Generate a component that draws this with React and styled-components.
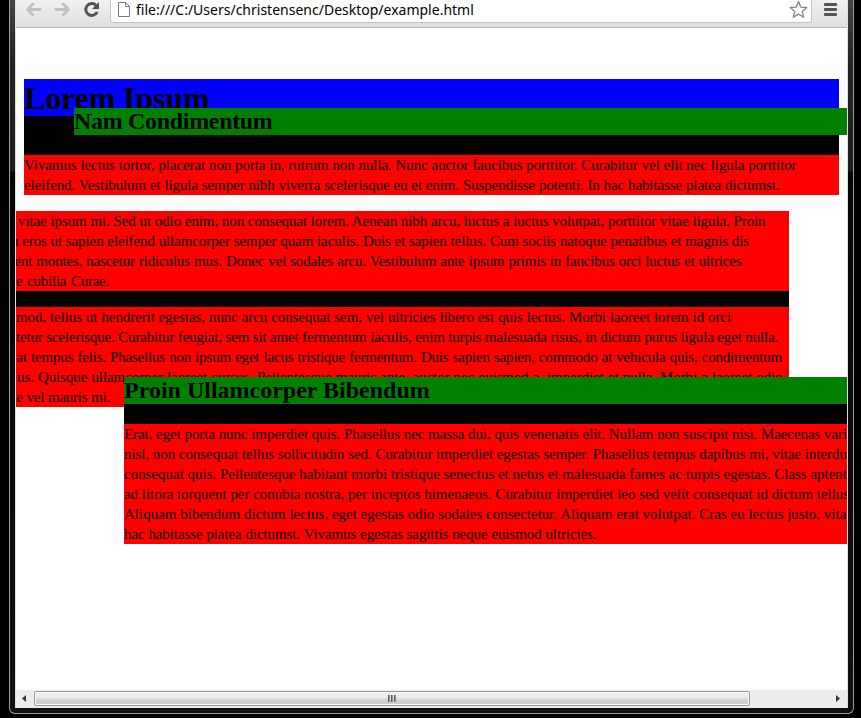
import React from 'react';
import styled, { createGlobalStyle } from 'styled-components';

const Global = createGlobalStyle`
  * { box-sizing: border-box; }
  body { margin: 0; background: #000; overflow: hidden; }
`;

const Desktop = styled.div`
  width: 861px;
  height: 718px;
  padding: 0 7px 4px 9px;
  background: #000;
`;

const WindowFrame = styled.div`
  width: 845px;
  height: 714px;
  padding: 0 5px 5px;
  border: 1px solid #9b9b9b;
  border-top: 0;
  border-radius: 0 0 6px 6px;
  background: linear-gradient(#454545 0, #242424 60px, #1d1d1d 171px, #050505 172px, #111 100%);
`;

const Browser = styled.div`
  display: flex;
  flex-direction: column;
  width: 833px;
  height: 708px;
  background: #fff;
  border: 1px solid #dedede;
  border-width: 0 1px;
`;

const Toolbar = styled.header`
  display: flex;
  flex: none;
  height: 28px;
  border-bottom: 1px solid #b3b3b3;
  background: linear-gradient(#f1f1f1, #dfdfdf);
`;

const NavButtons = styled.div`
  display: flex;
  width: 94px;
  padding-left: 9px;
  gap: 11px;
`;

const Glyph = styled.svg`
  display: block;
  flex: none;
  overflow: visible;
`;

const AddressBar = styled.div`
  display: flex;
  width: 702px;
  height: 23px;
  border: 1px solid #c4c4c4;
  border-top: 0;
  border-radius: 0 0 3px 3px;
  background: #fff;
  padding-left: 7px;
`;

const Address = styled.span`
  flex: 1;
  padding-left: 5px;
  font: 14px/20px "Noto Sans", "Open Sans", sans-serif;
  color: #000;
  white-space: nowrap;
`;

const MenuButton = styled.div`
  display: flex;
  flex-direction: column;
  gap: 2px;
  padding: 3px 0 0 12px;
`;

const MenuLine = styled.span`
  width: 13px;
  height: 3px;
  border-radius: 1px;
  background: #555;
`;

const Page = styled.main`
  flex: 1;
  min-height: 0;
  overflow: hidden;
  padding: 51px 8px 0;
  color: #000;
  font-family: "Liberation Serif", "Times New Roman", serif;
`;

const Section = styled.section`
  width: 815px;
  margin-left: ${(p) => p.$shift || 0}px;
  margin-top: ${(p) => p.$top || 0}px;
  background: #000;
  position: relative;
`;

const Title = styled.h1`
  margin: 0;
  height: 37px;
  background: #00f;
  font-size: 32px;
  line-height: 39px;
  letter-spacing: -0.13px;
`;

const Subtitle = styled.h2`
  position: relative;
  width: 815px;
  height: 27px;
  margin: ${(p) => p.$top || 0}px 0 20px ${(p) => p.$indent || 0}px;
  background: #008000;
  font-size: 24px;
  line-height: 27px;
  letter-spacing: ${(p) => p.$tracking || 0}px;
`;

const Paragraph = styled.p`
  margin: 0;
  background: #f00;
  font-size: 15px;
  line-height: 20px;
  & + & { margin-top: 16px; }
`;

const Line = styled.span`
  display: block;
  height: 20px;
  margin-left: ${(p) => p.$start || 0}px;
  width: ${(p) => (p.$width ? p.$width + 'px' : 'max-content')};
  letter-spacing: ${(p) => p.$tracking}px;
  white-space: ${(p) => (p.$width ? 'normal' : 'nowrap')};
  text-align-last: ${(p) => (p.$width ? 'justify' : 'left')};
`;

const ScrollBar = styled.footer`
  display: flex;
  flex: none;
  height: 18px;
  padding: 1px 0 2px;
  background: #ededed;
`;

const ScrollArrow = styled.div`
  display: flex;
  align-items: center;
  justify-content: center;
  width: 18px;
  padding-right: ${(p) => (p.$left ? 2 : 0)}px;
`;

const ScrollThumb = styled.div`
  display: flex;
  align-items: center;
  justify-content: center;
  gap: 1px;
  width: 716px;
  border: 1px solid #979797;
  border-radius: 2px;
  box-shadow: inset 0 0 0 1px #f8f8f8;
  background: linear-gradient(#f4f4f4 0, #e8e8e8 48%, #d6d6d6 52%, #cacaca 100%);
`;

const Grip = styled.i`
  width: 2px;
  height: 7px;
  background: linear-gradient(90deg, #444, #aaa);
`;

const ScrollTrack = styled.div`
  flex: 1;
`;

/* Each line: [text, start offset from the block, width or 0 for natural, letter spacing]. */
const intro = [
  ['Vivamus lectus tortor, placerat non porta in, rutrum non nulla. Nunc auctor faucibus porttitor. Curabitur vel elit nec ligula porttitor', 0, 772.5],
  ['eleifend. Vestibulum et ligula semper nibh viverra scelerisque eu et enim. Suspendisse potenti. In hac habitasse platea dictumst.', 0, 755.5],
];
const body1 = [
  ['vitae ipsum mi. Sed ut odio enim, non consequat lorem. Aenean nibh arcu, luctus a luctus volutpat, porttitor vitae ligula. Proin', 44, 747.5],
  ['u eros ut sapien eleifend ullamcorper semper quam iaculis. Duis et sapien tellus. Cum sociis natoque penatibus et magnis dis', 37, 738],
  ['ent montes, nascetur ridiculus mus. Donec vel sodales arcu. Vestibulum ante ipsum primis in faucibus orci luctus et ultrices', 40.5, 727, -0.17],
  ['e cubilia Curae.', 42, 93, -0.25],
];
const body2 = [
  ['mod, tellus ut hendrerit egestas, nunc arcu consequat sem, vel ultricies libero est quis lectus. Morbi laoreet lorem id orci', 42, 715],
  ['tetur scelerisque. Curabitur feugiat, sem sit amet fermentum iaculis, enim turpis malesuada risus, in dictum purus ligula eget nulla.', 42, 762, -0.17],
  ['at tempus felis. Phasellus non ipsum eget lacus tristique fermentum. Duis sapien sapien, commodo at vehicula quis, condimentum', 42.5, 765.5, -0.2],
  ['us. Quisque ullamcorper laoreet cursus. Pellentesque mauris ante, auctor nec euismod a, imperdiet et nulla. Morbi a laoreet odio', 43, 765.5],
  ['ue vel mauris mi.', 35, 101, -0.25],
];
const closing = [
  ['Erat, eget porta nunc imperdiet quis. Phasellus nec massa dui, quis venenatis elit. Nullam non suscipit nisi. Maecenas varius', 0, 0, -0.065],
  ['nisl, non consequat tellus sollicitudin sed. Curabitur imperdiet egestas semper. Phasellus tempus dapibus mi, vitae interdum', 0, 0, -0.06],
  ['consequat quis. Pellentesque habitant morbi tristique senectus et netus et malesuada fames ac turpis egestas. Class aptent', 0, 0, -0.015],
  ['ad litora torquent per conubia nostra, per inceptos himenaeos. Curabitur imperdiet leo sed velit consequat id dictum tellus.', 0, 0, -0.035],
  ['Aliquam bibendum dictum lectus, eget egestas odio sodales consectetur. Aliquam erat volutpat. Cras eu lectus justo, vitae', 0, 0, 0],
  ['hac habitasse platea dictumst. Vivamus egestas sagittis neque euismod ultricies.', 0, 472.5],
];

const Text = ({ lines }) => (
  <Paragraph>
    {lines.map(([text, start, width, tracking = -0.1]) => (
      <Line key={text} $start={start} $width={width} $tracking={tracking}>{text}</Line>
    ))}
  </Paragraph>
);

export default function App() {
  return (
    <Desktop>
      <Global />
      <WindowFrame>
        <Browser>
          <Toolbar>
            <NavButtons>
              <Glyph width="18" height="20" viewBox="0 0 18 20" fill="none" stroke="#c0c0c0" strokeWidth="2.8" strokeLinecap="round">
                <path d="M15 9.500H3.500M8 4l-5.500 5.500L8 15" />
              </Glyph>
              <Glyph width="18" height="20" viewBox="0 0 18 20" fill="none" stroke="#c0c0c0" strokeWidth="2.8" strokeLinecap="round">
                <path d="M2 9.500h11.500M9 4l5.500 5.500L9 15" />
              </Glyph>
              <Glyph width="18" height="20" viewBox="0 0 18 20" fill="none" stroke="#505050" strokeWidth="2.9">
                <path d="M13.2 5.400A6 6 0 1 0 14.200 12" />
                <path d="M16 2v7H9z" fill="#505050" stroke="none" />
              </Glyph>
            </NavButtons>
            <AddressBar>
              <Glyph width="13" height="20" viewBox="0 0 13 20" fill="#fff" stroke="#777">
                <path d="M0.500 2.500h7l4 4v10h-11zM7.500 2.500v4h4" />
              </Glyph>
              <Address>file:///C:/Users/christensenc/Desktop/example.html</Address>
              <Glyph width="22" height="20" viewBox="0 0 22 20" fill="#fff" stroke="#858585" strokeWidth="1.3" strokeLinejoin="round">
                <path d="M9.500 1.500l2.300 5.600 6 .4-4.600 3.900 1.500 5.900-5.200-3.200-5.200 3.200 1.500-5.900L1.200 7.500l6-.4z" />
              </Glyph>
            </AddressBar>
            <MenuButton>
              <MenuLine />
              <MenuLine />
              <MenuLine />
            </MenuButton>
          </Toolbar>
          <Page>
            <Section>
              <Title>Lorem Ipsum</Title>
              <Subtitle $top={-8} $indent={50} $tracking={-0.32}>Nam Condimentum</Subtitle>
              <Text lines={intro} />
            </Section>
            <Section $shift={-50} $top={16}>
              <Text lines={body1} />
              <Text lines={body2} />
            </Section>
            <Section $shift={100} $top={-30}>
              <Subtitle>Proin Ullamcorper Bibendum</Subtitle>
              <Text lines={closing} />
            </Section>
          </Page>
          <ScrollBar>
            <ScrollArrow $left>
              <Glyph width="4" height="7" viewBox="0 0 4 7" fill="#333"><path d="M4 0v7L0 3.500z" /></Glyph>
            </ScrollArrow>
            <ScrollThumb><Grip /><Grip /><Grip /></ScrollThumb>
            <ScrollTrack />
            <ScrollArrow>
              <Glyph width="4" height="7" viewBox="0 0 4 7" fill="#333"><path d="M0 0v7l4-3.500z" /></Glyph>
            </ScrollArrow>
          </ScrollBar>
        </Browser>
      </WindowFrame>
    </Desktop>
  );
}
